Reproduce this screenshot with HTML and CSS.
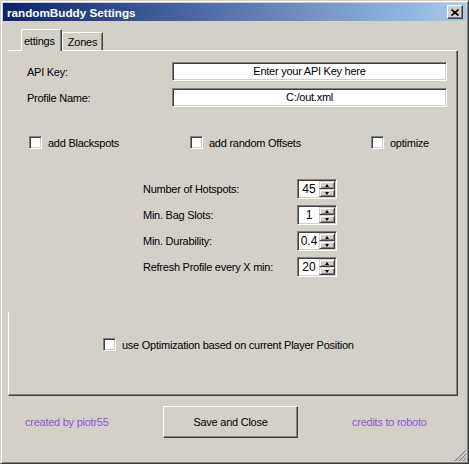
FILE: index.html
```html
<!DOCTYPE html>
<html>
<head>
<meta charset="utf-8">
<title>randomBuddy Settings</title>
<link rel="stylesheet" href="styles.css">
</head>
<body>
<div class="window">
  <div class="titlebar">
    <span class="title">randomBuddy Settings</span>
    <span class="close"><svg width="8" height="7" viewBox="0 0 8 7"><path d="M0.5 0.5 L7.5 6.5 M7.5 0.5 L0.5 6.5" stroke="#000" stroke-width="1.7" fill="none"/></svg></span>
  </div>
  <div class="tabs">
    <div class="tab active">ettings</div>
    <div class="tab">Zones</div>
  </div>
  <div class="page">
    <div class="fields">
      <span class="label">API Key:</span>
      <div class="textbox">Enter your API Key here</div>
      <span class="label">Profile Name:</span>
      <div class="textbox">C:/out.xml</div>
    </div>
    <div class="checks">
      <div class="check"><span class="box"></span>add Blackspots</div>
      <div class="check"><span class="box"></span>add random Offsets</div>
      <div class="check"><span class="box"></span>optimize</div>
    </div>
    <div class="nums">
      <span class="label">Number of Hotspots:</span>
      <div class="spin"><span class="val">45</span><span class="btns"><span class="sbtn"><i class="up"></i></span><span class="sbtn"><i class="down"></i></span></span></div>
      <span class="label">Min. Bag Slots:</span>
      <div class="spin"><span class="val">1</span><span class="btns"><span class="sbtn"><i class="up"></i></span><span class="sbtn"><i class="down"></i></span></span></div>
      <span class="label">Min. Durability:</span>
      <div class="spin"><span class="val">0.4</span><span class="btns"><span class="sbtn"><i class="up"></i></span><span class="sbtn"><i class="down"></i></span></span></div>
      <span class="label">Refresh Profile every X min:</span>
      <div class="spin"><span class="val">20</span><span class="btns"><span class="sbtn"><i class="up"></i></span><span class="sbtn"><i class="down"></i></span></span></div>
    </div>
    <div class="check bottom-check"><span class="box"></span>use Optimization based on current Player Position</div>
  </div>
  <div class="footer">
    <span class="credit first">created by piotr55</span>
    <div class="btn">Save and Close</div>
    <span class="credit second">credits to roboto</span>
  </div>
  <svg class="grip" width="12" height="12" viewBox="0 0 12 12">
    <path d="M11 1 L1 11 M11 5 L5 11 M11 9 L9 11" stroke="#fff" stroke-width="1" fill="none"/>
    <path d="M12 1 L1 12 M12 5 L5 12 M12 9 L9 12" stroke="#808080" stroke-width="1.2" fill="none"/>
  </svg>
</div>
</body>
</html>
```
FILE: styles.css
```css
* { box-sizing: border-box; }

body {
  margin: 0;
  background: #d4d0c8;
  font-family: "Liberation Sans", Arial, sans-serif;
  font-size: 11px;
  letter-spacing: -0.25px;
  color: #000;
}

.window {
  position: relative;
  width: 469px;
  height: 464px;
  border: 1px solid;
  border-color: #d4d0c8 #404040 #404040 #d4d0c8;
  box-shadow: inset 1px 1px #fff, inset -1px -1px #808080;
  padding: 2px;
  display: flex;
  flex-direction: column;
}

.titlebar {
  height: 18px;
  background: linear-gradient(to right, #0a246a, #a6caf0);
  display: flex;
  align-items: center;
  justify-content: space-between;
  padding: 0 3px 0 4px;
}

.title {
  color: #fff;
  font-weight: bold;
  font-size: 11.7px;
  letter-spacing: 0;
}

.close {
  width: 16px;
  height: 14px;
  background: #d4d0c8;
  border: 1px solid;
  border-color: #fff #404040 #404040 #fff;
  box-shadow: inset -1px -1px #808080;
  display: flex;
  align-items: center;
  justify-content: center;
}

.tabs {
  display: flex;
  align-items: flex-end;
  height: 29px;
  padding-left: 18px;
}

.tab {
  height: 18px;
  width: 41px;
  border: 1px solid;
  border-bottom: none;
  border-color: #fff #404040 transparent #fff;
  box-shadow: inset -1px 0 #808080;
  text-align: center;
  padding-top: 3px;
  background: #d4d0c8;
}

.tab.active {
  height: 22px;
  width: 41px;
  margin-bottom: -1px;
  position: relative;
  z-index: 1;
  text-align: left;
  padding: 5px 0 0 2px;
}

.page {
  position: relative;
  margin-left: 5px;
  width: 450px;
  height: 346px;
  border-top: 1px solid #fff;
  border-left: 1px solid transparent;
  border-right: 1px solid #404040;
  border-bottom: 1px solid #404040;
  box-shadow: inset -1px -1px #808080;
}

.page::before {
  content: "";
  position: absolute;
  left: -1px;
  top: 261px;
  bottom: 0;
  width: 1px;
  background: #fff;
}

.fields {
  display: grid;
  grid-template-columns: 145px 275px;
  row-gap: 7px;
  align-items: center;
  margin: 11px 0 0 18px;
}

.textbox {
  height: 19px;
  background: #fff;
  border: 1px solid;
  border-color: #808080 #fff #fff #808080;
  box-shadow: inset 1px 1px #404040, inset -1px -1px #d4d0c8;
  text-align: center;
  line-height: 17px;
}

.checks {
  display: grid;
  grid-template-columns: 161px 181px auto;
  margin: 29px 0 0 20px;
}

.check {
  display: flex;
  align-items: center;
  height: 13px;
}

.box {
  width: 13px;
  height: 13px;
  flex: none;
  background: #fff;
  border: 1px solid;
  border-color: #808080 #fff #fff #808080;
  box-shadow: inset 1px 1px #404040, inset -1px -1px #d4d0c8;
  margin-right: 6px;
}

.nums {
  display: grid;
  grid-template-columns: 154px 40px;
  grid-auto-rows: 20px;
  row-gap: 6px;
  align-items: center;
  margin: 30px 0 0 134px;
}

.spin {
  height: 20px;
  width: 40px;
  display: flex;
  background: #fff;
  border: 1px solid;
  border-color: #808080 #fff #fff #808080;
  box-shadow: inset 1px 1px #404040, inset -1px -1px #d4d0c8;
  padding: 1px;
}

.val {
  flex: 1;
  text-align: center;
  font-size: 12px;
  letter-spacing: 0;
  line-height: 16px;
}

.btns {
  width: 16px;
  display: flex;
  flex-direction: column;
}

.sbtn {
  flex: 1;
  background: #d4d0c8;
  border: 1px solid;
  border-color: #d4d0c8 #404040 #404040 #d4d0c8;
  box-shadow: inset 1px 1px #fff, inset -1px -1px #808080;
  display: flex;
  align-items: center;
  justify-content: center;
}

.up, .down {
  width: 0;
  height: 0;
  border-left: 2.5px solid transparent;
  border-right: 2.5px solid transparent;
}

.up { border-bottom: 3px solid #000; }
.down { border-top: 3px solid #000; }

.bottom-check {
  margin: 61px 0 0 94px;
}

.footer {
  display: flex;
  align-items: center;
  margin-top: 10px;
  padding-left: 22px;
}

.credit {
  color: #8a57d6;
}

.credit.first {
  width: 138px;
}

.btn {
  width: 135px;
  height: 32px;
  border: 1px solid;
  border-color: #fff #404040 #404040 #fff;
  box-shadow: inset -1px -1px #808080;
  display: flex;
  align-items: center;
  justify-content: center;
}

.credit.second {
  margin-left: 54px;
}

.grip {
  position: absolute;
  right: 2px;
  bottom: 2px;
}
```
